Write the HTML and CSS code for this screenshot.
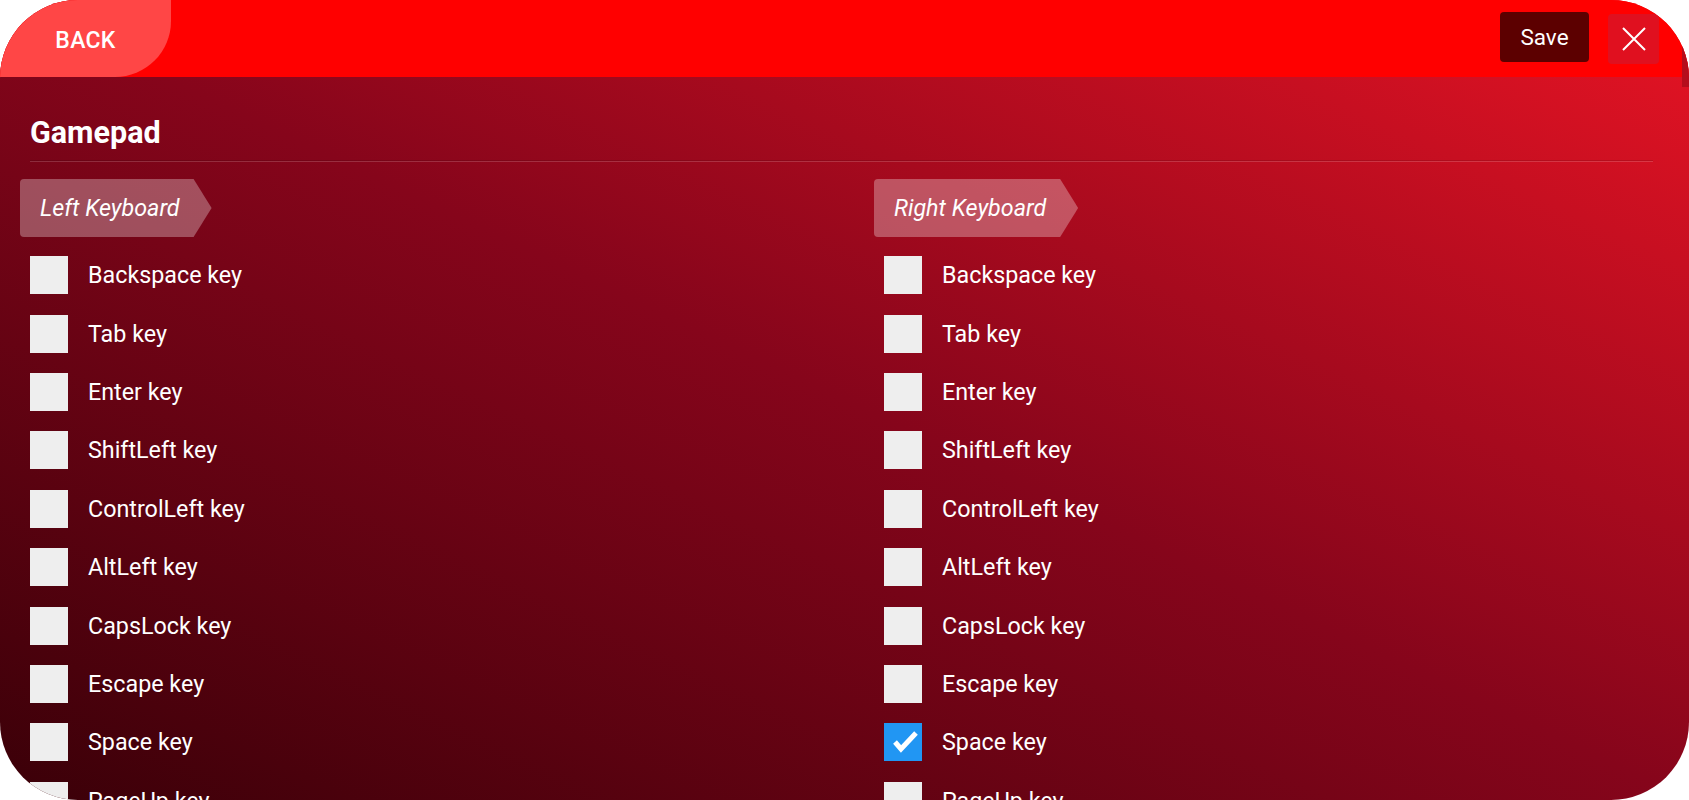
FILE: index.html
```html
<!DOCTYPE html>
<html lang="en">
<head>
<meta charset="utf-8">
<title>Gamepad</title>
<link rel="stylesheet" href="styles.css">
</head>
<body>
<div class="app">
  <header class="topbar">
    <button class="back">BACK</button>
    <div class="actions">
      <button class="save">Save</button>
      <button class="close" aria-label="Close">
        <svg width="24" height="24" viewBox="0 0 24 24"><path d="M1 1 L23 23 M23 1 L1 23" stroke="#fff" stroke-width="2" fill="none"/></svg>
      </button>
    </div>
  </header>
  <main class="content">
    <h1 class="title">Gamepad</h1>
    <hr class="divider">
    <div class="columns">
      <section class="col">
        <div class="ribbon">Left Keyboard</div>
        <ul class="keys">
          <li class="key"><span class="box"></span><span class="label">Backspace key</span></li>
          <li class="key"><span class="box"></span><span class="label">Tab key</span></li>
          <li class="key"><span class="box"></span><span class="label">Enter key</span></li>
          <li class="key"><span class="box"></span><span class="label">ShiftLeft key</span></li>
          <li class="key"><span class="box"></span><span class="label">ControlLeft key</span></li>
          <li class="key"><span class="box"></span><span class="label">AltLeft key</span></li>
          <li class="key"><span class="box"></span><span class="label">CapsLock key</span></li>
          <li class="key"><span class="box"></span><span class="label">Escape key</span></li>
          <li class="key"><span class="box"></span><span class="label">Space key</span></li>
          <li class="key"><span class="box"></span><span class="label">PageUp key</span></li>
          <li class="key"><span class="box"></span><span class="label">PageDown key</span></li>
        </ul>
      </section>
      <section class="col">
        <div class="ribbon">Right Keyboard</div>
        <ul class="keys">
          <li class="key"><span class="box"></span><span class="label">Backspace key</span></li>
          <li class="key"><span class="box"></span><span class="label">Tab key</span></li>
          <li class="key"><span class="box"></span><span class="label">Enter key</span></li>
          <li class="key"><span class="box"></span><span class="label">ShiftLeft key</span></li>
          <li class="key"><span class="box"></span><span class="label">ControlLeft key</span></li>
          <li class="key"><span class="box"></span><span class="label">AltLeft key</span></li>
          <li class="key"><span class="box"></span><span class="label">CapsLock key</span></li>
          <li class="key"><span class="box"></span><span class="label">Escape key</span></li>
          <li class="key"><span class="box checked"><svg width="38" height="38" viewBox="0 0 38 38"><path d="M11 19 L17 26 L32 10" stroke="#fff" stroke-width="5" fill="none" stroke-linejoin="miter"/></svg></span><span class="label">Space key</span></li>
          <li class="key"><span class="box"></span><span class="label">PageUp key</span></li>
          <li class="key"><span class="box"></span><span class="label">PageDown key</span></li>
        </ul>
      </section>
    </div>
  </main>
  <div class="thumb"></div>
</div>
</body>
</html>
```
FILE: styles.css
```css
* { box-sizing: border-box; }
html, body { margin: 0; padding: 0; background: #ffffff; }
body { font-family: Roboto, "Noto Sans", sans-serif; color: #fff; overflow: hidden; }

.app {
  position: relative;
  width: 1689px;
  height: 800px;
  border-radius: 78px;
  overflow: hidden;
  display: flex;
  flex-direction: column;
  background: linear-gradient(to top right, #3a0008 0%, #86051b 50%, #e81424 100%);
}

.topbar {
  height: 77px;
  flex: none;
  background: #ff0000;
  display: flex;
  align-items: flex-start;
}

button { font-family: inherit; border: 0; color: #fff; cursor: pointer; padding: 0; }

.back {
  width: 171px;
  height: 77px;
  background: #ff4646;
  border-bottom-right-radius: 56px;
  font-size: 23px;
  font-weight: 500;
  padding-top: 3px;
  letter-spacing: 0.3px;
}

.actions {
  margin-left: auto;
  margin-right: 30px;
  display: flex;
  align-items: flex-start;
  gap: 19px;
}

.save {
  margin-top: 12px;
  width: 89px;
  height: 50px;
  background: #5c0000;
  border-radius: 4px;
  font-size: 22.5px;
}

.close {
  margin-top: 14px;
  width: 51px;
  height: 50px;
  background: #e0101f;
  border-radius: 4px;
  display: flex;
  align-items: center;
  justify-content: center;
}

.content {
  flex: 1;
  min-height: 0;
  overflow: hidden;
  padding: 38px 36px 0 20px;
}

.title {
  margin: 0 0 0 10px;
  font-size: 30.5px;
  line-height: 36px;
  font-weight: 700;
}

.divider {
  margin: 9px 0 0 10px;
  height: 2px;
  border: 0;
  border-top: 1px solid rgba(0, 0, 0, 0.12);
  border-bottom: 1px solid rgba(255, 255, 255, 0.16);
}

.columns {
  margin-top: 17px;
  display: grid;
  grid-template-columns: 854px 1fr;
}

.ribbon {
  display: inline-flex;
  align-items: center;
  height: 58px;
  padding: 0 32px 0 20px;
  background: rgba(255, 255, 255, 0.3);
  border-radius: 4px 0 0 4px;
  clip-path: polygon(0 0, calc(100% - 18px) 0, 100% 50%, calc(100% - 18px) 100%, 0 100%);
  font-size: 23.3px;
  font-style: italic;
}

.keys {
  list-style: none;
  margin: 9px 0 0 0;
  padding: 0;
}

.key {
  height: 58.4px;
  display: flex;
  align-items: center;
  gap: 20px;
  padding-left: 10px;
}

.box {
  width: 38px;
  height: 38px;
  flex: none;
  background: #eeeeee;
  display: flex;
}

.box.checked { background: #2196f3; }

.label { font-size: 23.3px; }

.thumb {
  position: absolute;
  top: 0;
  right: 0;
  width: 7px;
  height: 87px;
  background: #b50e1c;
}
```
